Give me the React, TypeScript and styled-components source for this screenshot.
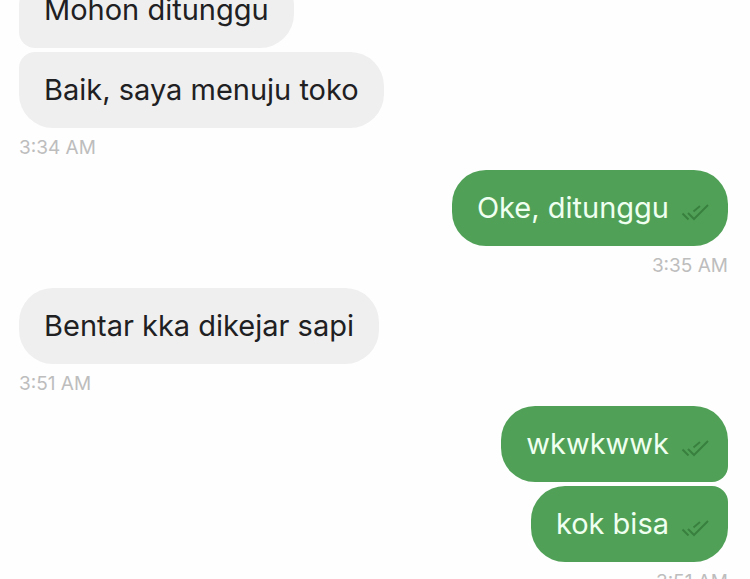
import React from "react";
import styled, { createGlobalStyle, css } from "styled-components";

const GlobalStyle = createGlobalStyle`
  * { box-sizing: border-box; }
  html, body, #root { height: 100%; }
  body {
    margin: 0;
    overflow: hidden;
    background: #fefefe;
    font-family: Inter, "Liberation Sans", sans-serif;
  }
`;

type Side = "in" | "out";
type Joint = "top" | "bottom";

const Viewport = styled.main`
  height: 100%;
  overflow: hidden;
`;

/* The thread is scrolled part of the way past its first message. */
const Thread = styled.div`
  display: flex;
  flex-direction: column;
  gap: 8px;
  margin-top: -28px;
  padding: 0 22px 0 19px;
`;

const Group = styled.section<{ $side: Side }>`
  display: flex;
  flex-direction: column;
  align-items: ${(p) => (p.$side === "out" ? "flex-end" : "flex-start")};
  gap: 4px;
`;

const Bubble = styled.div<{ $side: Side; $joint?: Joint }>`
  display: flex;
  align-items: center;
  gap: 12px;
  min-height: 76px;
  padding: 18px 25px;
  border-radius: 34px;
  font-size: 29px;
  line-height: 40px;
  ${(p) =>
    p.$side === "out"
      ? css`
          padding-right: 19px;
          color: #effff0;
          background: #50a157;
        `
      : css`
          color: #202022;
          background: #efefef;
        `}
  ${(p) =>
    p.$joint &&
    css`
      border-${p.$joint}-${p.$side === "out" ? "right" : "left"}-radius: 16px;
    `}
`;

const Text = styled.p`
  margin: 0;
`;

const Time = styled.time`
  padding-top: 2px;
  font-size: 19px;
  line-height: 28px;
  color: #bdbdbd;
`;

const Ticks = styled.svg`
  flex: none;
  width: 28px;
  height: 18px;
  margin-top: 8px;
  fill: none;
  stroke: #39803f;
  stroke-width: 2;
`;

const ReadMark = () => (
  <Ticks viewBox="0 0 28 18" role="img" aria-label="Read">
    <path d="M1.5 10.5 7.5 16.5M7 10 13 16 27 2M12.5 8.5 19 3" />
  </Ticks>
);

interface GroupData {
  side: Side;
  time: string;
  messages: string[];
}

const groups: GroupData[] = [
  { side: "in", time: "3:34 AM", messages: ["Mohon ditunggu", "Baik, saya menuju toko"] },
  { side: "out", time: "3:35 AM", messages: ["Oke, ditunggu"] },
  { side: "in", time: "3:51 AM", messages: ["Bentar kka dikejar sapi"] },
  { side: "out", time: "3:51 AM", messages: ["wkwkwwk", "kok bisa"] },
];

const jointOf = (index: number, count: number): Joint | undefined => {
  if (count < 2) return undefined;
  return index === 0 ? "bottom" : "top";
};

export default function App() {
  return (
    <>
      <GlobalStyle />
      <Viewport>
        <Thread>
          {groups.map((group, g) => (
            <Group key={g} $side={group.side}>
              {group.messages.map((message, i) => (
                <Bubble key={i} $side={group.side} $joint={jointOf(i, group.messages.length)}>
                  <Text>{message}</Text>
                  {group.side === "out" && <ReadMark />}
                </Bubble>
              ))}
              <Time>{group.time}</Time>
            </Group>
          ))}
        </Thread>
      </Viewport>
    </>
  );
}
